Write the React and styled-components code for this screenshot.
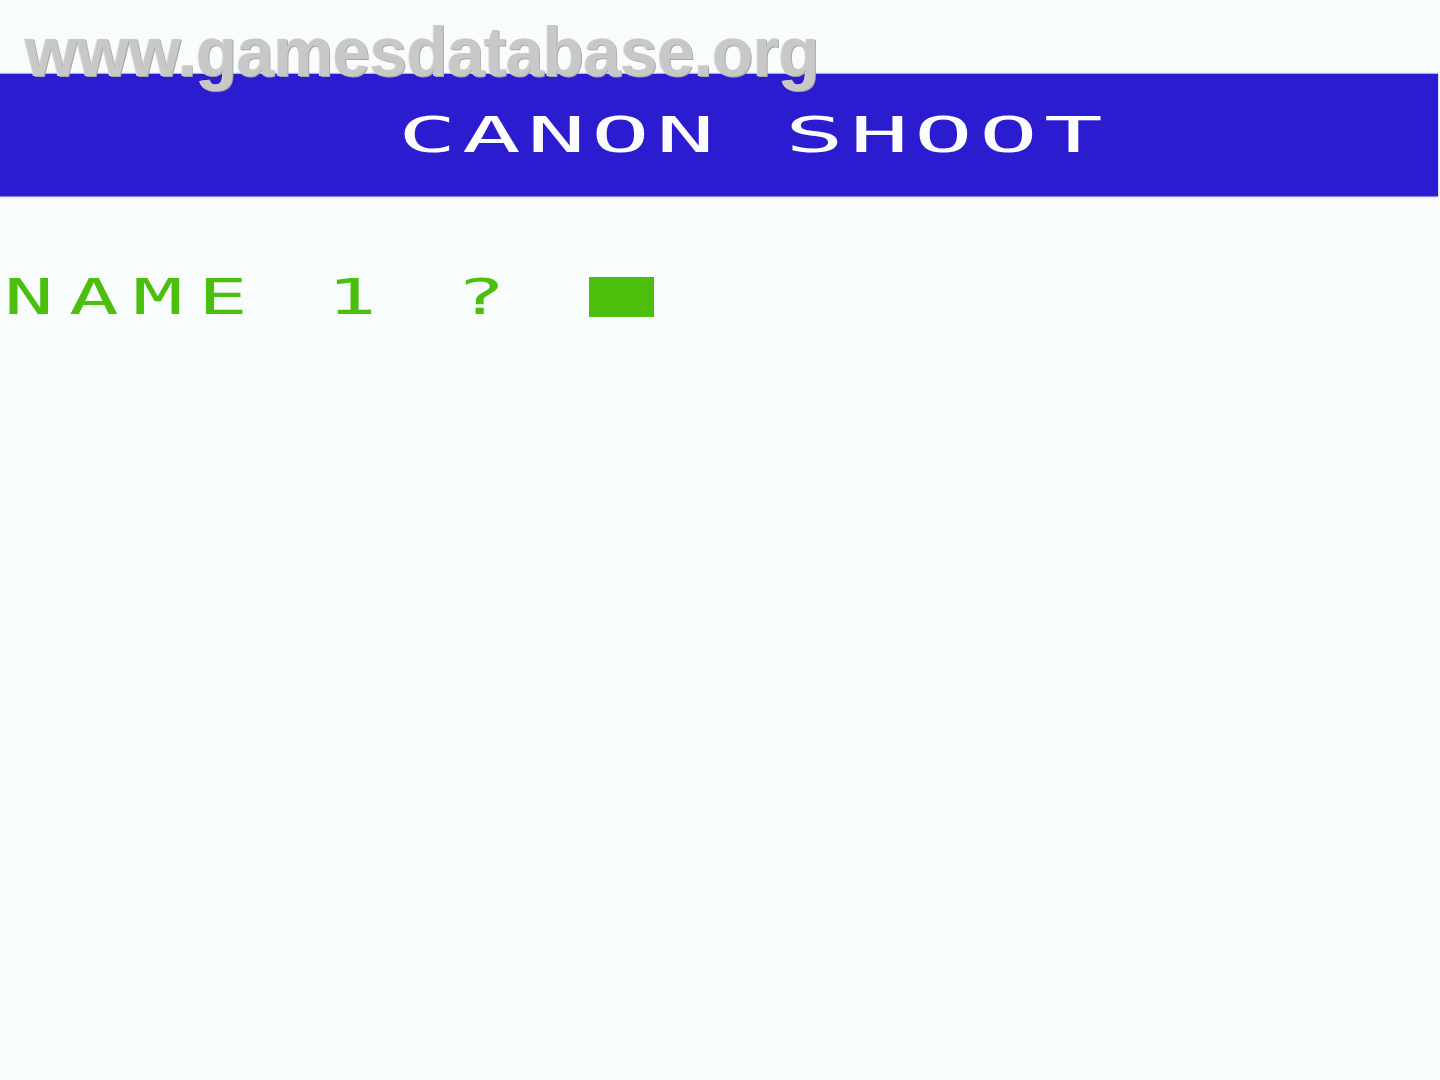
import styled, { createGlobalStyle } from "styled-components";

const CELL = 64.6;

const GlobalStyle = createGlobalStyle`
  html, body {
    margin: 0;
    padding: 0;
    background: #f8fcfc;
  }
  #root {
    min-height: 1080px;
  }
`;

const Screen = styled.div`
  position: relative;
  width: 1440px;
  height: 1080px;
  overflow: hidden;
  background: #f8fcfc;
  padding-top: 74px;
  box-sizing: border-box;
`;

const Watermark = styled.div`
  position: absolute;
  left: 25px;
  top: 17px;
  font-family: "Liberation Sans", Arial, sans-serif;
  font-weight: 700;
  font-size: 70px;
  letter-spacing: -0.5px;
  color: #c8c8c8;
  text-shadow: 1px 1px 0 #a8a8a8, -1px 0 0 #dcdcdc;
  transform: scaleX(0.96);
  transform-origin: left top;
  white-space: nowrap;
  line-height: 1;
`;

const Banner = styled.div`
  height: 122px;
  width: 1438px;
  background: #2c1cd0;
  box-shadow: 0 1px 1px #8c84e8, 0 -1px 1px #b4b0f0;
  display: flex;
  align-items: center;
  padding-left: 8px;
  box-sizing: border-box;
`;

const Line = styled.div`
  display: flex;
  align-items: center;
  height: 40px;
  padding-left: 8px;
  color: ${(p) => p.$color};
  margin-top: ${(p) => p.$top || 0}px;
`;

const Cell = styled.span`
  display: inline-flex;
  align-items: center;
  width: ${CELL}px;
  height: 40px;
  flex: none;
  overflow: visible;
`;

const Glyph = styled.span`
  display: inline-block;
  font-family: "DejaVu Sans Mono", "Liberation Mono", monospace;
  font-size: 50px;
  line-height: 40px;
  transform: scaleX(${(p) => p.$stretch});
  transform-origin: left center;
  margin-left: ${(p) => p.$shift}px;
`;

const Cursor = styled.span`
  display: inline-block;
  width: ${CELL}px;
  height: 40px;
  background: #4cbe0c;
  flex: none;
`;

const Text = ({ children, stretch, shift }) =>
  children.split("").map((ch, i) => (
    <Cell key={i}>
      <Glyph $stretch={stretch} $shift={shift}>
        {ch === " " ? "\u00a0" : ch}
      </Glyph>
    </Cell>
  ));

export default function App() {
  return (
    <>
      <GlobalStyle />
      <Screen>
        <Banner>
          <Line $color="#fcfcfc">
            <Text stretch={1.95} shift={-6}>{"      CANON SHOOT"}</Text>
          </Line>
        </Banner>
        <Line $color="#4cbe0c" $top={81}>
          <Text stretch={1.65} shift={-4}>{"NAME 1 ? "}</Text>
          <Cursor />
        </Line>
        <Watermark>www.gamesdatabase.org</Watermark>
      </Screen>
    </>
  );
}
